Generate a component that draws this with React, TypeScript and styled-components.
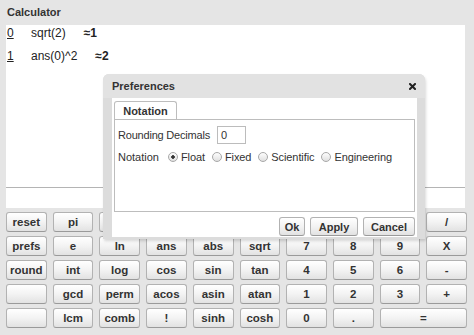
import React from "react";
import styled, { createGlobalStyle } from "styled-components";

const Global = createGlobalStyle`
  html, body { margin: 0; padding: 0; }
  body {
    background: #e5e5e5;
    font-family: "Liberation Sans", Arial, sans-serif;
    color: #222;
  }
`;

const Window = styled.div`
  position: relative;
  width: 474px;
  height: 335px;
  box-sizing: border-box;
  padding: 0 9px 0 6px;
  background: #e5e5e5;
  display: flex;
  flex-direction: column;
  overflow: hidden;
`;

const TitleBar = styled.div`
  height: 25px;
  display: flex;
  align-items: center;
  padding-left: 1px;
  padding-bottom: 1px;
  box-sizing: border-box;
  font-weight: bold;
  font-size: 11px;
  color: #333;
`;

const History = styled.div`
  height: 162px;
  background: #fff;
  display: flex;
  flex-direction: column;
  gap: 7px;
  padding: 0 1px;
`;

const HistoryRow = styled.div`
  display: flex;
  align-items: center;
  height: 16px;
  font-size: 12px;
  color: #222;
`;

const Index = styled.span`
  width: 24px;
  text-decoration: underline;
`;

const Expr = styled.span`
  margin-right: 18px;
`;

const Result = styled.span`
  font-weight: bold;
`;

const InputLine = styled.div`
  height: 20px;
  background: #fff;
  border-top: 1px solid #b4b4b4;
`;

const Keypad = styled.div`
  width: 461px;
  margin-top: 4px;
  display: grid;
  grid-template-columns: repeat(10, 1fr);
  grid-auto-rows: 20px;
  column-gap: 6px;
  row-gap: 4px;
`;

const Key = styled.button<{ $span?: number }>`
  grid-column: span ${(p) => p.$span ?? 1};
  margin: 0;
  padding: 0;
  border: 1px solid #b2b2b2;
  border-bottom-color: #9a9a9a;
  border-radius: 3px;
  background: linear-gradient(#ffffff 0%, #f3f3f3 50%, #e2e2e2 100%);
  font-family: "Liberation Sans", Arial, sans-serif;
  font-weight: bold;
  font-size: 11.5px;
  color: #333;
  line-height: 18px;
`;

const Dialog = styled.div`
  position: absolute;
  left: 103px;
  top: 74px;
  width: 322px;
  height: 165px;
  background: #dcdcdc;
  border-radius: 6px 6px 0 0;
  box-shadow: 1px 2px 3px rgba(0, 0, 0, 0.15);
  display: flex;
  flex-direction: column;
`;

const DialogTitle = styled.div`
  height: 24px;
  display: flex;
  align-items: center;
  justify-content: space-between;
  padding: 0 9px 0 9px;
  font-weight: bold;
  font-size: 11px;
  color: #333;
  background: #e2e2e2;
  border-radius: 6px 6px 0 0;
`;

const DialogBody = styled.div`
  flex: 1;
  margin: 0 8px 2px 9px;
  background: #fff;
  padding: 3px 2px 0 2px;
  display: flex;
  flex-direction: column;
`;

const TabBar = styled.div`
  display: flex;
`;

const Tab = styled.div`
  width: 63px;
  height: 18px;
  box-sizing: border-box;
  border: 1px solid #bdbdbd;
  border-bottom: none;
  border-radius: 3px 3px 0 0;
  font-weight: bold;
  font-size: 11px;
  color: #333;
  display: flex;
  align-items: center;
  justify-content: center;
  background: #fff;
`;

const TabPanel = styled.div`
  height: 93px;
  box-sizing: border-box;
  border: 1px solid #bdbdbd;
  padding: 6px 3px 0 3px;
  display: flex;
  flex-direction: column;
  gap: 4px;
  font-size: 11px;
  color: #333;
`;

const FormRow = styled.div`
  display: flex;
  align-items: center;
  height: 18px;
`;

const Label = styled.span`
  margin-right: 7px;
  letter-spacing: -0.2px;
`;

const TextBox = styled.div`
  width: 29px;
  height: 18px;
  box-sizing: border-box;
  border: 1px solid #bcbcbc;
  padding-left: 3px;
  font-size: 11px;
  display: flex;
  align-items: center;
`;

const RadioGroup = styled.div`
  display: flex;
  align-items: center;
  margin-left: 9px;
  gap: 7px;
  letter-spacing: -0.1px;
`;

const RadioOption = styled.label`
  display: flex;
  align-items: center;
  gap: 3px;
`;

const RadioCircle = styled.span<{ $checked?: boolean }>`
  width: 10px;
  height: 10px;
  box-sizing: border-box;
  border-radius: 50%;
  border: 1px solid #a8a8a8;
  background: ${(p) =>
    p.$checked
      ? "radial-gradient(circle, #333 0 1.5px, transparent 2px), linear-gradient(#fdfdfd, #e0e0e0)"
      : "linear-gradient(#fdfdfd, #e0e0e0)"};
`;

const ButtonBar = styled.div`
  display: flex;
  justify-content: flex-end;
  gap: 5px;
  margin-top: 5px;
`;

const DialogButton = styled.button<{ $w: number }>`
  width: ${(p) => p.$w}px;
  height: 19px;
  margin: 0;
  padding: 0;
  border: 1px solid #b2b2b2;
  border-bottom-color: #9a9a9a;
  border-radius: 3px;
  background: linear-gradient(#ffffff 0%, #f3f3f3 50%, #e2e2e2 100%);
  font-family: "Liberation Sans", Arial, sans-serif;
  font-weight: bold;
  font-size: 11px;
  color: #333;
`;

const keys: { label: string; span?: number }[] = [
  { label: "reset" }, { label: "pi" }, { label: "" }, { label: "" }, { label: "" },
  { label: "" }, { label: "" }, { label: "" }, { label: "" }, { label: "/" },
  { label: "prefs" }, { label: "e" }, { label: "ln" }, { label: "ans" }, { label: "abs" },
  { label: "sqrt" }, { label: "7" }, { label: "8" }, { label: "9" }, { label: "X" },
  { label: "round" }, { label: "int" }, { label: "log" }, { label: "cos" }, { label: "sin" },
  { label: "tan" }, { label: "4" }, { label: "5" }, { label: "6" }, { label: "-" },
  { label: "" }, { label: "gcd" }, { label: "perm" }, { label: "acos" }, { label: "asin" },
  { label: "atan" }, { label: "1" }, { label: "2" }, { label: "3" }, { label: "+" },
  { label: "" }, { label: "lcm" }, { label: "comb" }, { label: "!" }, { label: "sinh" },
  { label: "cosh" }, { label: "0" }, { label: "." }, { label: "=", span: 2 },
];

const history = [
  { i: "0", expr: "sqrt(2)", res: "≈1" },
  { i: "1", expr: "ans(0)^2", res: "≈2" },
];

const radios = ["Float", "Fixed", "Scientific", "Engineering"];

export default function App() {
  return (
    <>
      <Global />
      <Window>
        <TitleBar>Calculator</TitleBar>
        <History>
          {history.map((h) => (
            <HistoryRow key={h.i}>
              <Index>{h.i}</Index>
              <Expr>{h.expr}</Expr>
              <Result>{h.res}</Result>
            </HistoryRow>
          ))}
        </History>
        <InputLine />
        <Keypad>
          {keys.map((k, idx) => (
            <Key key={idx} $span={k.span}>
              {k.label}
            </Key>
          ))}
        </Keypad>
        <Dialog>
          <DialogTitle>
            <span>Preferences</span>
            <svg width="7" height="7" viewBox="0 0 7 7">
              <path d="M1 1L6 6M6 1L1 6" stroke="#222" strokeWidth="2" strokeLinecap="square" />
            </svg>
          </DialogTitle>
          <DialogBody>
            <TabBar>
              <Tab>Notation</Tab>
            </TabBar>
            <TabPanel>
              <FormRow>
                <Label>Rounding Decimals</Label>
                <TextBox>0</TextBox>
              </FormRow>
              <FormRow>
                <span>Notation</span>
                <RadioGroup>
                  {radios.map((r, i) => (
                    <RadioOption key={r}>
                      <RadioCircle $checked={i === 0} />
                      <span>{r}</span>
                    </RadioOption>
                  ))}
                </RadioGroup>
              </FormRow>
            </TabPanel>
            <ButtonBar>
              <DialogButton $w={26}>Ok</DialogButton>
              <DialogButton $w={48}>Apply</DialogButton>
              <DialogButton $w={52}>Cancel</DialogButton>
            </ButtonBar>
          </DialogBody>
        </Dialog>
      </Window>
    </>
  );
}
